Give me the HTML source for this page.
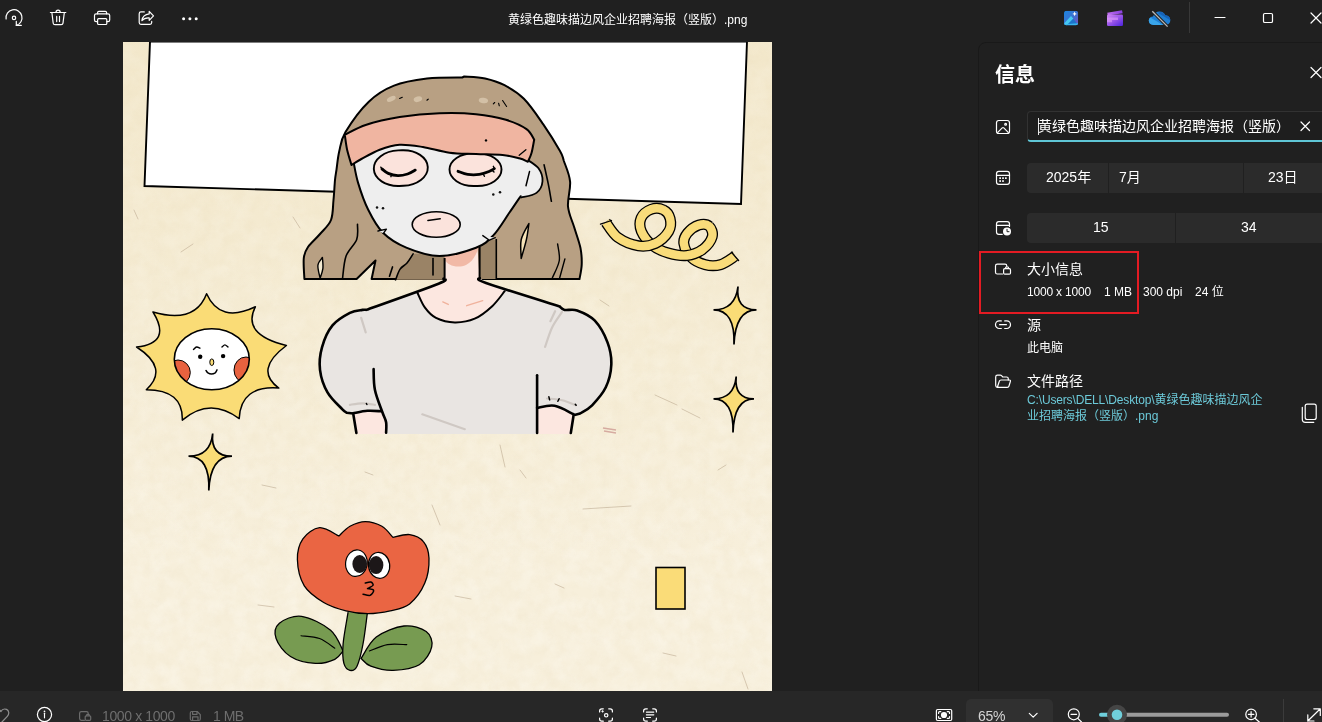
<!DOCTYPE html>
<html lang="zh-CN">
<head>
<meta charset="utf-8">
<title>照片</title>
<style>
*{box-sizing:border-box;margin:0;padding:0}
html,body{width:1322px;height:722px;overflow:hidden;background:#202020}
body{position:relative;font-family:"Liberation Sans","Noto Sans CJK SC",sans-serif;color:#fff;font-size:12px}
.abs{position:absolute}
svg{position:absolute;overflow:visible}
.ic{fill:none;stroke:#fff;stroke-width:1.2;stroke-linecap:round;stroke-linejoin:round}
.t{position:absolute;white-space:nowrap;line-height:1;will-change:transform}
#title{left:0;top:0;width:1322px;height:42px;background:#202020}
#title .name{left:508px;top:13.5px;font-size:12px;color:#fff}
#viewer{left:0;top:42px;width:979px;height:649px;background:#202020}
#art{left:123px;top:42px;width:649px;height:649px}
#panel{left:978px;top:42px;width:360px;height:660px;background:#202020;border:1px solid #191919;border-radius:8px 0 0 0}
#bottom{left:0;top:691px;width:1322px;height:31px;background:#272727}
.box{position:absolute;background:#2b2b2b;border-radius:4px}
.dim{color:#757575}
.link{color:#6cc9d8}
</style>
</head>
<body>
<!-- TITLE BAR -->
<div id="title" class="abs">
  <svg style="left:0;top:0" width="1322" height="42" viewBox="0 0 1322 42">
 <defs>
  <linearGradient id="g1" x1="0" y1="0" x2="1" y2="1"><stop offset="0" stop-color="#1a86e0"/><stop offset=".55" stop-color="#3f6fd0"/><stop offset="1" stop-color="#7a4fc0"/></linearGradient>
  <linearGradient id="g2" x1="0" y1="0" x2="1" y2="1"><stop offset="0" stop-color="#d487f5"/><stop offset=".5" stop-color="#9a55ea"/><stop offset="1" stop-color="#4a22dc"/></linearGradient>
  <linearGradient id="g3" x1="0" y1="0" x2="1" y2="0"><stop offset="0" stop-color="#c070f0"/><stop offset="1" stop-color="#8a3fe0"/></linearGradient>
  <clipPath id="c1"><rect x="1064" y="10.800" width="14.2" height="14.400" rx="2.6"/></clipPath>
 </defs>
 <!-- rotate -->
 <g class="ic" stroke-width="1.25">
  <path d="M6.100 19A8 8 0 1 1 16.300 25.400"/>
  <path d="M16.300 21.300V25.400H21.300"/>
  <circle cx="14" cy="17.900" r="1.700"/>
 </g>
 <!-- trash -->
 <g class="ic" stroke-width="1.2">
  <path d="M50.400 12.500H65.800"/>
  <path d="M56 12.300A2.100 2.100 0 0 1 60.200 12.300"/>
  <path d="M51.900 12.800L53.200 23.200Q53.400 24.700 55 24.700H61.200Q62.800 24.700 63 23.200L64.300 12.800"/>
  <path d="M56.700 16.400V21.600M59.500 16.400V21.600"/>
 </g>
 <!-- print -->
 <g class="ic" stroke-width="1.25">
  <path d="M97.600 13.800V12.600Q97.600 11.300 98.900 11.300H105.300Q106.600 11.300 106.600 12.600V13.800"/>
  <path d="M97.500 21.700H96.200Q94.500 21.700 94.500 20V15.500Q94.500 13.800 96.200 13.800H108Q109.700 13.800 109.700 15.500V20Q109.700 21.700 108 21.700H106.800"/>
  <rect x="97.600" y="18.700" width="9.200" height="5.800" rx="1"/>
 </g>
 <!-- share -->
 <g class="ic" stroke-width="1.25">
  <path d="M144.300 11.900H141Q139.200 11.900 139.200 13.700V22.600Q139.200 24.400 141 24.400H149.900Q151.700 24.400 151.700 22.600V21.400"/>
  <path d="M149.200 11.400L153.500 15.800L149.200 20.300V17.900Q144.500 17.600 141.900 20.600Q142.800 14.600 149.200 13.900Z"/>
 </g>
 <!-- more -->
 <g fill="#fff"><circle cx="183.600" cy="18.800" r="1.500"/><circle cx="189.900" cy="18.800" r="1.500"/><circle cx="196.200" cy="18.800" r="1.500"/></g>

 <!-- app icon 1 -->
 <g clip-path="url(#c1)">
  <rect x="1064" y="10.800" width="14.200" height="14.400" fill="url(#g1)"/>
  <path d="M1062 27L1071.500 16.800L1080 27Z" fill="#1d74cc"/>
  <path d="M1062 25.500L1071 16L1073.300 18.400L1066.500 25.500Z" fill="#45c8f2"/>
  <path d="M1064 25.300H1078.200V23.200Q1071 23.400 1064 24.400Z" fill="#38b4ec"/>
 </g>
 <path d="M1074.600 11.600L1075.300 13.200L1076.900 13.900L1075.300 14.600L1074.600 16.200L1073.900 14.600L1072.300 13.900L1073.900 13.200Z" fill="#fff"/>
 <!-- app icon 2 -->
 <path d="M1107.200 12.800L1122 10.200L1122.700 13.200L1107.800 15.600Z" fill="url(#g3)"/>
 <rect x="1107" y="14.600" width="16" height="11.400" rx="1.200" fill="url(#g2)"/>
 <path d="M1107 17.500H1118V20H1112V22.300H1107Z" fill="#e6a4fb" opacity=".55"/>
 <!-- onedrive -->
 <path d="M1153.500 25C1150.500 25 1148.800 23 1148.800 20.800C1148.800 18.300 1150.800 16.700 1153 16.600C1154 13.500 1156.500 11.600 1159.500 11.600C1162.500 11.600 1164.600 13.300 1165.500 15.600C1168.200 15.500 1170.300 17.600 1170.300 20.200C1170.300 23 1168.200 25 1165.500 25Z" fill="#1f7fd4"/>
 <path d="M1153.500 25C1150.500 25 1148.800 23 1148.800 20.800C1148.800 19.500 1149.400 18.300 1150.300 17.600L1163 25Z" fill="#39a5ea"/>
 <path d="M1158 13C1160.500 10.800 1164.300 12.200 1165.500 15.600C1168.200 15.500 1170.300 17.600 1170.300 20.200L1158 13Z" fill="#1763b8"/>
 <path d="M1152.300 11.200L1167.600 26.600" stroke="#202020" stroke-width="3.200"/>
 <path d="M1152.300 11.200L1167.600 26.600" stroke="#b9b9b9" stroke-width="1.300"/>
 <!-- separator -->
 <path d="M1189.500 2V33" stroke="#383838" stroke-width="1"/>
 <!-- window controls -->
 <g class="ic" stroke-width="1.050" stroke-linecap="butt">
  <path d="M1215 17.500H1225"/>
  <rect x="1263.500" y="13.500" width="9" height="9" rx="1.300"/>
  <path d="M1311 13L1321 23M1321 13L1311 23"/>
 </g>
</svg>

  <div class="t name">黄绿色趣味描边风企业招聘海报（竖版）.png</div>
</div>

<!-- VIEWER -->
<div id="viewer" class="abs"></div>
<svg id="artsvg" style="left:0;top:0" width="1322" height="722" viewBox="0 0 1322 722">
<defs>
  <clipPath id="cp"><rect x="123" y="42" width="649" height="649"/></clipPath>
  <filter id="grain" x="0" y="0" width="100%" height="100%">
    <feTurbulence type="fractalNoise" baseFrequency="0.06" numOctaves="4" seed="7" result="n"/>
    <feColorMatrix type="matrix" values="0 0 0 0 1  0 0 0 0 0.99  0 0 0 0 0.95  1.6 0 0 0 -0.55"/>
  </filter>
  <filter id="grain2" x="0" y="0" width="100%" height="100%">
    <feTurbulence type="fractalNoise" baseFrequency="0.09" numOctaves="3" seed="11" result="n"/>
    <feColorMatrix type="matrix" values="0 0 0 0 0.80  0 0 0 0 0.70  0 0 0 0 0.50  0 1.5 0 0 -0.62"/>
  </filter>
  <linearGradient id="pg" x1="0" y1="0" x2="0" y2="1"><stop offset="0" stop-color="#e6d29c" stop-opacity=".26"/><stop offset=".45" stop-color="#e6d29c" stop-opacity=".12"/><stop offset=".8" stop-color="#e6d29c" stop-opacity="0"/></linearGradient>
</defs>
<g clip-path="url(#cp)">
  <rect x="123" y="42" width="649" height="649" fill="#f7efdb"/>
  <rect x="123" y="42" width="649" height="649" filter="url(#grain)" opacity=".36"/>
  <rect x="123" y="42" width="649" height="649" filter="url(#grain2)" opacity=".22"/>
  <rect x="123" y="42" width="649" height="649" fill="url(#pg)"/>
  <g stroke="#b9a68c" stroke-width="1" fill="none" opacity=".55" stroke-linecap="round">
    <path d="M181 252l12-8M134 210l4 9M300 228l-7-11M655 395l22 10M700 418l-18-9M600 300l9 6"/>
    <path d="M262 485l14 3M432 505l8 20M500 445l5 22M583 509l48-3M455 596l16 3M258 605l16 2M564 588l-9-4M663 653l13 3M742 672l6 17M520 470l6 8M365 472l8 3M718 470l8 -5"/>
  </g>
  <path d="M603 428l13 2M604 431l12 2" stroke="#c9908a" stroke-width="1.4" opacity=".7"/>
  <!-- white sheet -->
  <path d="M150 41.5L747 41.5L741 204L144.5 186Z" fill="#fff" stroke="#000" stroke-width="1.9"/>

<g>
<path d="M709.2 226.2C707.0 224.3 702.6 223.9 698.9 225.0C695.3 226.2 689.9 230.1 687.4 233.1C684.9 236.2 683.3 239.5 683.8 243.4C684.3 247.3 686.9 253.2 690.5 256.7C694.0 260.3 699.9 263.3 705.0 264.6C710.0 265.9 715.7 266.0 720.7 264.6C725.8 263.2 732.8 257.5 735.2 256.1" fill="none" stroke="#000" stroke-width="11"/><path d="M709.2 226.2C707.0 224.3 702.6 223.9 698.9 225.0C695.3 226.2 689.9 230.1 687.4 233.1C684.9 236.2 683.3 239.5 683.8 243.4C684.3 247.3 686.9 253.2 690.5 256.7C694.0 260.3 699.9 263.3 705.0 264.6C710.0 265.9 715.7 266.0 720.7 264.6C725.8 263.2 732.8 257.5 735.2 256.1" fill="none" stroke="#f9dc7a" stroke-width="8.4"/>
<path d="M663.2 209.8C660.1 208.2 654.8 207.9 651.1 209.3C647.4 210.7 642.7 214.3 641.1 218.0C639.5 221.7 639.5 226.7 641.4 231.3C643.4 235.9 648.4 242.2 652.9 245.8C657.5 249.5 663.0 251.5 668.7 253.1C674.3 254.7 681.2 256.1 686.8 255.5C692.5 254.9 698.3 252.6 702.6 249.5C706.8 246.3 711.1 240.6 712.2 236.8C713.3 232.9 711.4 228.2 709.2 226.2" fill="none" stroke="#000" stroke-width="11"/><path d="M663.2 209.8C660.1 208.2 654.8 207.9 651.1 209.3C647.4 210.7 642.7 214.3 641.1 218.0C639.5 221.7 639.5 226.7 641.4 231.3C643.4 235.9 648.4 242.2 652.9 245.8C657.5 249.5 663.0 251.5 668.7 253.1C674.3 254.7 681.2 256.1 686.8 255.5C692.5 254.9 698.3 252.6 702.6 249.5C706.8 246.3 711.1 240.6 712.2 236.8C713.3 232.9 711.4 228.2 709.2 226.2" fill="none" stroke="#f9dc7a" stroke-width="8.4"/>
<path d="M605.7 222.2C607.8 224.8 612.4 233.4 617.8 237.4C623.3 241.3 632.2 244.8 638.4 245.8C644.7 246.8 650.3 245.8 655.4 243.4C660.4 241.0 666.2 235.4 668.7 231.3C671.1 227.2 671.0 222.2 670.1 218.6C669.2 215.0 666.4 211.3 663.2 209.8" fill="none" stroke="#000" stroke-width="11"/><path d="M605.7 222.2C607.8 224.8 612.4 233.4 617.8 237.4C623.3 241.3 632.2 244.8 638.4 245.8C644.7 246.8 650.3 245.8 655.4 243.4C660.4 241.0 666.2 235.4 668.7 231.3C671.1 227.2 671.0 222.2 670.1 218.6C669.2 215.0 666.4 211.3 663.2 209.8" fill="none" stroke="#f9dc7a" stroke-width="8.4"/>
<circle cx="663.2" cy="209.8" r="3.7" fill="#f9dc7a"/><circle cx="709.2" cy="226.2" r="3.7" fill="#f9dc7a"/>
<path d="M600.5 224.2L611.5 220.5M731.5 252.3L738.6 260.5" stroke="#000" stroke-width="1.3" fill="none" stroke-linecap="round"/>
</g>
<g fill="#fadc76" stroke="#000" stroke-width="1.7" stroke-linejoin="miter" stroke-miterlimit="10">
<path d="M738.0 286.5C736.2 302.0 742.5 309.9 756.5 309.8C742.5 309.9 734.9 321.7 734.0 344.5C734.9 321.7 727.9 309.9 713.5 309.8C727.9 309.9 736.2 302.0 738.0 286.5Z"/>
<path d="M736.2 376.5C734.7 391.4 740.8 398.9 754.0 398.8C740.8 398.9 733.7 410.4 733.0 432.5C733.7 410.4 727.0 398.9 713.5 398.8C727.0 398.9 734.7 391.4 736.2 376.5Z"/>
<path d="M212.7 433.5C211.1 448.7 217.7 456.4 232.0 456.2C217.7 456.4 209.8 468.1 208.8 490.5C209.8 468.1 202.9 456.4 188.5 456.2C202.9 456.4 211.1 448.7 212.7 433.5Z"/>
</g>
<rect x="656" y="567.5" width="29" height="41.5" fill="#fadc78" stroke="#000" stroke-width="1.6"/>
<path d="M206.6 293.7Q220.0 323.7 255.4 306.8Q241.1 334.4 286.4 345.5Q253.7 369.9 278.8 388.1Q240.7 385.1 239.2 418.6Q209.8 396.5 182.3 420.1Q183.2 389.7 146.3 389.7Q169.5 368.3 136.6 347.0Q172.2 343.2 153.0 312.0Q195.1 324.2 206.6 293.7Z" fill="#fadc76" stroke="#000" stroke-width="1.5" stroke-linejoin="round"/>
<clipPath id="sf"><ellipse cx="211.8" cy="359.2" rx="37.5" ry="30.5"/></clipPath>
<ellipse cx="211.8" cy="359.2" rx="37.5" ry="30.5" fill="#fff"/>
<g clip-path="url(#sf)"><ellipse cx="178" cy="372.500" rx="12.300" ry="12.500" fill="#e8623f" stroke="#000" stroke-width="1"/><ellipse cx="246" cy="370" rx="12" ry="13" fill="#e8623f" stroke="#000" stroke-width="1"/></g>
<ellipse cx="211.8" cy="359.2" rx="37.5" ry="30.5" fill="none" stroke="#000" stroke-width="1.6"/>
<circle cx="200.2" cy="356.8" r="2.2" fill="#000"/><circle cx="223.1" cy="356.1" r="2.2" fill="#000"/>
<ellipse cx="211.8" cy="362.2" rx="2" ry="3.3" fill="#fadc76" stroke="#000" stroke-width="1"/>
<path d="M206.0 370.5C206.3 370.9 206.9 372.3 207.9 372.9C208.8 373.5 210.3 374.1 211.5 374.1C212.7 374.1 214.2 373.6 215.2 372.9C216.1 372.2 216.7 370.4 217.0 369.9" fill="none" stroke="#000" stroke-width="1.5" stroke-linecap="round"/>
<path d="M193.5 349.4C194.0 349.0 195.5 347.2 196.6 347.0C197.6 346.8 199.4 348.0 199.9 348.2M221.9 347.0C222.4 346.7 223.9 344.9 224.9 344.9C225.9 344.9 227.4 346.7 228.0 347.0" fill="none" stroke="#000" stroke-width="1.4" stroke-linecap="round"/>
<path d="M343.1 651.0C341.0 647.5 337.6 636.0 330.6 630.2C323.7 624.4 310.1 617.5 301.6 616.3C293.0 615.2 283.6 619.6 279.4 623.3C275.1 627.0 274.2 633.0 276.1 638.5C277.9 644.0 283.9 652.4 290.5 656.5C297.0 660.7 308.0 663.0 315.4 663.4C322.8 663.9 330.2 661.4 334.8 659.3C339.4 657.2 341.7 652.4 343.1 651.0Z" fill="#779b51" stroke="#000" stroke-width="1.3"/>
<path d="M361.1 658.4C363.6 654.9 369.2 642.5 376.3 637.1C383.5 631.7 395.7 627.0 404.0 626.0C412.4 625.1 421.6 628.1 426.2 631.6C430.8 635.0 432.9 641.3 431.7 646.8C430.6 652.4 425.7 660.9 419.3 664.8C412.8 668.7 401.0 670.1 393.0 670.4C384.9 670.6 376.1 668.2 370.8 666.2C365.5 664.2 362.7 659.7 361.1 658.4Z" fill="#779b51" stroke="#000" stroke-width="1.3"/>
<path d="M301.0 635.7C304.1 636.2 313.9 636.4 319.6 638.5C325.2 640.6 332.3 646.6 334.8 648.2M369.4 651.0C372.4 649.9 381.2 645.7 387.4 644.6C393.7 643.5 403.6 644.6 406.8 644.6" fill="none" stroke="#000" stroke-width="1.1" stroke-linecap="round"/>
<path d="M348.1 612.2C347.3 617.5 343.8 635.5 343.1 644.0C342.4 652.6 342.8 659.0 343.9 663.4C345.1 667.8 347.9 669.9 350.0 670.4C352.2 670.8 354.8 670.6 357.0 666.2C359.1 661.8 361.3 653.0 363.0 644.0C364.8 635.0 366.7 617.5 367.5 612.2" fill="#779b51" stroke="#000" stroke-width="1.3"/>
<path d="M338.9 536.0C335.7 534.6 325.6 527.2 319.6 527.7C313.6 528.2 306.6 533.5 302.9 538.8C299.2 544.1 297.2 551.7 297.4 559.6C297.6 567.4 299.9 578.7 304.3 585.9C308.7 593.0 316.8 598.3 323.7 602.5C330.6 606.6 338.5 609.0 345.9 610.8C353.3 612.7 360.6 613.6 368.0 613.6C375.4 613.6 383.3 612.4 390.2 610.8C397.1 609.2 403.8 608.5 409.6 603.9C415.4 599.3 421.6 590.7 424.8 583.1C428.1 575.5 429.2 565.1 429.0 558.2C428.7 551.2 426.7 545.5 423.4 541.6C420.2 537.6 414.7 535.3 409.6 534.6C404.5 533.9 395.7 536.9 393.0 537.4C391.1 535.5 386.5 528.9 381.9 526.3C377.3 523.7 370.6 521.6 365.3 521.6C360.0 521.6 354.4 523.9 350.0 526.3C345.6 528.7 340.8 534.4 338.9 536.0Z" fill="#ea6543" stroke="#000" stroke-width="1.3" stroke-linejoin="round"/>
<ellipse cx="379.1" cy="565.4" rx="10.6" ry="13" fill="#fff" stroke="#000" stroke-width="1.2" transform="rotate(-8 379.1 565.4)"/>
<ellipse cx="356.4" cy="563.2" rx="10.8" ry="13.3" fill="#fff" stroke="#000" stroke-width="1.2" transform="rotate(8 356.4 563.2)"/>
<ellipse cx="359.7" cy="564.0" rx="7.3" ry="9" fill="#1c1718"/><ellipse cx="376.1" cy="565.1" rx="7.3" ry="9" fill="#1c1718"/>
<path d="M365.3 583.1C366.2 582.9 369.5 581.6 370.8 582.0C372.1 582.4 373.6 584.2 373.0 585.3C372.5 586.4 368.4 588.1 367.5 588.6C368.5 588.9 373.1 589.2 373.6 590.3C374.0 591.4 372.0 594.6 370.2 595.3C368.5 595.9 364.2 594.4 363.0 594.2" fill="none" stroke="#000" stroke-width="1.5" stroke-linecap="round" stroke-linejoin="round"/>
<path d="M304.4 279.0C304.3 275.5 303.2 263.3 303.8 258.0C304.4 252.7 305.3 251.0 308.0 247.0C310.7 243.0 316.2 238.5 320.0 234.0C323.8 229.5 328.8 225.7 331.0 220.0C333.2 214.3 332.8 206.7 333.5 200.0C334.2 193.3 334.5 185.1 335.0 180.0C335.5 174.9 335.8 174.4 336.5 169.6C337.2 164.8 337.8 157.4 339.3 151.1C340.8 144.9 340.6 140.4 345.5 132.1C350.4 123.9 360.7 109.4 368.8 101.7C376.9 93.9 384.3 89.4 394.0 85.6C403.7 81.8 415.6 80.0 427.0 78.6C438.3 77.3 456.4 77.6 462.2 77.5L464.2 76.5C467.7 76.8 478.4 77.0 485.1 78.4C491.9 79.9 498.1 81.8 504.5 85.2C511.0 88.6 517.4 92.3 523.9 98.8C530.4 105.3 537.3 115.7 543.3 124.4C549.3 133.1 556.6 145.1 560.0 151.1C563.4 157.2 562.2 155.7 563.8 160.8C565.5 165.8 569.4 173.9 570.1 181.6C570.8 189.2 567.3 198.9 568.0 206.5C568.7 214.1 572.1 220.3 574.2 227.3C576.3 234.2 579.2 241.8 580.5 248.1C581.7 254.3 581.9 259.5 581.7 264.7C581.5 269.8 579.9 276.6 579.5 279.0L371.6 279.0L375.5 260.5L356.6 279.0L304.4 279.0Z" fill="#b8a083" stroke="#000" stroke-width="2" stroke-linejoin="round"/>
<path d="M413.1 253.9C412.1 255.4 409.2 260.5 407.0 263.0C404.8 265.6 402.0 266.3 400.1 269.1C398.2 271.9 396.3 278.0 395.6 279.8L445.1 279.8L445.1 253.1Z" fill="#9a8366"/>
<path d="M413.1 253.9C412.1 255.4 409.2 260.5 407.0 263.0C404.8 265.6 402.0 266.3 400.1 269.1C398.2 271.9 396.3 278.0 395.6 279.8" fill="none" stroke="#000" stroke-width="1.6" stroke-linecap="round"/>
<rect x="476" y="240" width="20.3" height="39" fill="#9a8366"/><path d="M496.3 239V279" stroke="#000" stroke-width="1.6"/>
<path d="M433 258.500V275" stroke="#000" stroke-width="1.6" stroke-linecap="round"/>
<path d="M357.5 224.2C357.3 226.7 358.6 234.1 356.7 239.4C354.8 244.8 348.4 249.6 346.0 256.2C343.7 262.7 343.1 275.0 342.5 278.7" fill="none" stroke="#000" stroke-width="1.6" stroke-linecap="round"/>
<path d="M392.5 266.9L389.5 276.3" fill="none" stroke="#000" stroke-width="1.6" stroke-linecap="round"/>
<path d="M322.4 257.4C321.7 258.7 318.2 261.9 317.9 265.3C317.5 268.8 319.8 276.1 320.1 278.3C320.6 276.6 322.5 271.9 322.9 268.4C323.3 264.9 322.5 259.2 322.4 257.4Z" fill="#f3ead2" stroke="#000" stroke-width="1.4" stroke-linejoin="round"/>
<path d="M528.9 223.5C527.6 226.2 522.5 233.9 521.2 239.7C520.0 245.6 521.2 255.3 521.2 258.4C522.1 255.3 525.1 245.6 526.4 239.7C527.7 233.9 528.5 226.2 528.9 223.5Z" fill="#f6e3b8" stroke="#000" stroke-width="1.5" stroke-linejoin="round"/>
<path d="M544.1 164.9C544.8 168.1 547.0 177.6 548.2 183.6C549.5 189.7 550.8 198.4 551.4 201.3" fill="none" stroke="#000" stroke-width="1.6" stroke-linecap="round"/>
<path d="M557.6 243.9C557.9 246.7 560.1 254.9 559.3 260.5C558.4 266.2 553.5 274.9 552.4 277.8M564.9 258.9L559.7 277.8" fill="none" stroke="#000" stroke-width="1.4" stroke-linecap="round"/>
<ellipse cx="391.3" cy="98.9" rx="4.7" ry="2.3" fill="#d3c0a6" transform="rotate(-25 391.3 98.9)"/>
<ellipse cx="417.9" cy="99.2" rx="4.3" ry="2.7" fill="#d3c0a6" transform="rotate(-15 417.9 99.2)"/>
<ellipse cx="483.4" cy="100.5" rx="4.7" ry="2.7" fill="#d3c0a6" transform="rotate(10 483.4 100.5)"/>
<path d="M399.6 98.5L402.3 97.2M426.9 100.2L428.2 99.2M493.3 103.9L494.7 102.5M498.6 103.2L499.3 105.8M502.6 100.5L506.6 106.5" stroke="#000" stroke-width="1.1" stroke-linecap="round"/>
<path d="M445.1 256.2L444.3 279L440 283L417 293L455 325L506 291L486 283L479.6 279L477.6 248.1Z" fill="#fce7e0"/>
<path d="M444.6 250L444.6 259C447 266 458 268.500 466 265C472 262 476 256 478.800 247Z" fill="#f1b9a6"/>
<path d="M444.6 258V279M479.6 247V279" stroke="#000" stroke-width="2" fill="none"/>
<path d="M443.5 278.7C442.7 279.6 451.4 278.5 438.5 283.7C425.6 288.9 378.2 305.6 366.2 309.9C365.5 309.9 365.1 309.4 362.4 309.9C359.7 310.4 354.9 310.3 349.9 312.9C344.9 315.5 337.1 319.7 332.5 325.4C327.8 331.1 324.0 340.0 322.0 347.4C319.9 354.8 319.1 362.3 320.0 369.8C320.9 377.3 323.7 385.7 327.5 392.3C331.2 398.9 339.2 405.9 342.4 409.3C345.6 412.7 346.0 412.2 346.7 412.8L353.2 413.5L356.2 434L570.8 434L573.6 415.3C582.1 412.1 587.8 409.7 592.1 405.3C596.3 400.9 602.6 394.0 605.8 387.3C609.0 380.6 611.0 372.3 611.3 364.8C611.6 357.4 610.3 349.8 607.5 342.4C604.8 335.0 599.6 325.7 594.6 320.4C589.5 315.1 582.1 312.2 577.1 310.4C572.1 308.7 567.5 310.6 564.6 309.9C561.7 309.3 560.4 307.0 559.6 306.4C547.3 302.5 499.3 287.7 486.0 283.0C472.7 278.2 480.8 278.8 479.7 278.0Z" fill="#e9e5e2"/>
<path d="M417.3 292.5C418.6 294.9 421.7 303.2 424.8 307.4C427.9 311.7 431.1 315.4 436.0 317.9C441.0 320.4 448.3 322.3 454.8 322.4C461.2 322.5 468.5 321.4 474.7 318.7C481.0 316.0 487.2 310.8 492.2 306.2C497.2 301.6 502.6 293.7 504.7 291.2L486 282.500L479.6 278L444.3 278L440 283Z" fill="#fce7e0"/>
<path d="M417.3 292.5C418.6 294.9 421.7 303.2 424.8 307.4C427.9 311.7 431.1 315.4 436.0 317.9C441.0 320.4 448.3 322.3 454.8 322.4C461.2 322.5 468.5 321.4 474.7 318.7C481.0 316.0 487.2 310.8 492.2 306.2C497.2 301.6 502.6 293.7 504.7 291.2" fill="none" stroke="#000" stroke-width="2" stroke-linecap="round"/>
<path d="M442.8 301.9L448.3 304.4M466.7 305.7L482.7 300.7" stroke="#f0b29c" stroke-width="1.4" fill="none" stroke-linecap="round"/>
<path d="M353.2 413.3C355.5 412.9 362.7 411.1 367.4 410.8C372.1 410.4 378.8 411.2 381.1 411.3L386.1 419.8L386.1 434L356.2 434Z" fill="#fce7e0"/>
<path d="M537.1 407.8C540.1 407.4 548.5 404.7 554.6 405.8C560.7 406.9 570.4 412.9 573.6 414.3L570.8 434L537.1 434Z" fill="#fce7e0"/>
<g fill="none" stroke="#000" stroke-width="2.6" stroke-linecap="round" stroke-linejoin="round">
<path d="M443.5 278.7C442.7 279.6 451.4 278.5 438.5 283.7C425.6 288.9 378.2 305.6 366.2 309.9C365.5 309.9 365.1 309.4 362.4 309.9C359.7 310.4 354.9 310.3 349.9 312.9C344.9 315.5 337.1 319.7 332.5 325.4C327.8 331.1 324.0 340.0 322.0 347.4C319.9 354.8 319.1 362.3 320.0 369.8C320.9 377.3 323.7 385.7 327.5 392.3C331.2 398.9 339.2 405.9 342.4 409.3C345.6 412.7 346.0 412.2 346.7 412.8L353.2 413.5L356.4 433"/><path d="M479.7 278.0C480.8 278.8 472.7 278.2 486.0 283.0C499.3 287.7 547.3 302.5 559.6 306.4C560.4 307.0 561.7 309.3 564.6 309.9C567.5 310.6 572.1 308.7 577.1 310.4C582.1 312.2 589.5 315.1 594.6 320.4C599.6 325.7 604.8 335.0 607.5 342.4C610.3 349.8 611.6 357.4 611.3 364.8C611.0 372.3 609.0 380.6 605.8 387.3C602.6 394.0 596.3 400.9 592.1 405.3C587.8 409.7 582.1 412.1 580.1 413.5L573.6 415.3L570.8 433"/>
<path d="M353.2 413.3C355.5 412.9 362.7 411.1 367.4 410.8C372.1 410.4 378.8 411.2 381.1 411.3"/><path d="M537.1 407.8C540.1 407.4 548.5 404.7 554.6 405.8C560.7 406.9 570.4 412.9 573.6 414.3"/>
<path d="M373.6 369.1C373.8 372.5 373.4 382.6 374.9 389.8C376.3 397.0 380.5 406.9 382.4 412.3C384.2 417.7 385.5 418.8 386.1 422.3C386.7 425.7 386.1 431.0 386.1 432.7"/>
<path d="M537.1 375.3V433"/>
</g>
<g fill="none" stroke="#cfc8c3" stroke-width="2.2" stroke-linecap="round">
<path d="M361.2 317.9L365.7 332.4M562.1 311.9C560.4 314.5 555.0 321.6 552.1 327.4C549.3 333.2 546.3 343.6 545.1 346.9M555.1 311.2L550.4 321.2M422.3 414.3L464.8 429.2M349.9 404.8C352.0 404.5 358.2 403.3 362.4 403.3C366.6 403.3 372.8 404.5 374.9 404.8M547.1 398.5C549.6 398.8 557.3 399.2 562.1 400.3C566.9 401.4 573.5 404.4 575.8 405.3"/>
</g>
<path d="M366.4 403.5L366.9 404.5M548.9 396.8L549.6 399.8M559.1 398.8L557.9 401.3M575.3 404.3L576.1 405.3" stroke="#000" stroke-width="1.5" stroke-linecap="round"/>
<path d="M527.2 159.7C529.1 161.1 536.0 164.7 538.5 168.3C541.1 171.9 542.8 177.2 542.5 181.3C542.2 185.4 540.1 190.2 536.5 192.9C533.0 195.6 523.8 196.8 521.2 197.5L505.9 192.9L505.9 159.7Z" fill="#eeeeee"/>
<path d="M527.2 159.7C529.1 161.1 536.0 164.7 538.5 168.3C541.1 171.9 542.8 177.2 542.5 181.3C542.2 185.4 540.1 190.2 536.5 192.9C533.0 195.6 523.8 196.8 521.2 197.5" fill="none" stroke="#000" stroke-width="1.8" stroke-linejoin="round" stroke-linecap="round"/>
<path d="M353.1 159.7C354.0 163.5 355.6 174.6 358.1 182.9C360.6 191.2 363.9 201.2 368.1 209.5C372.2 217.8 376.7 226.4 383.0 232.8C389.4 239.1 396.9 243.8 406.3 247.7C415.7 251.6 427.9 256.0 439.5 256.0C451.1 256.0 467.1 251.1 476.0 247.7C485.0 244.3 487.8 241.2 493.3 235.4C498.9 229.6 504.7 219.4 509.3 212.8C513.8 206.3 518.7 199.0 520.6 196.2L527.9 159.7L505.9 133.1L373.1 133.1Z" fill="#eeeeee"/>
<path d="M353.1 159.7C354.0 163.5 355.6 174.6 358.1 182.9C360.6 191.2 363.9 201.2 368.1 209.5C372.2 217.8 376.7 226.4 383.0 232.8C389.4 239.1 396.9 243.8 406.3 247.7C415.7 251.6 427.9 256.0 439.5 256.0C451.1 256.0 467.1 251.1 476.0 247.7C485.0 244.3 487.8 241.2 493.3 235.4C498.9 229.6 504.7 219.4 509.3 212.8C513.8 206.3 518.7 199.0 520.6 196.2" fill="none" stroke="#000" stroke-width="2" stroke-linecap="round"/>
<path d="M529.5 171.6L526.0 185.7" stroke="#000" stroke-width="1.5" stroke-linecap="round"/>
<path d="M378.0 231.0L386.4 229.1L383.4 233.3" fill="#eeeeee" stroke="#000" stroke-width="1.4" stroke-linejoin="round" stroke-linecap="round"/>
<path d="M482.8 235.6L489.4 240.2L495.3 237.7" fill="#eeeeee" stroke="#000" stroke-width="1.4" stroke-linejoin="round" stroke-linecap="round"/>
<rect x="373.8" y="150.3" width="54" height="35.6" rx="25" ry="17.8" fill="#fbe3dc" stroke="#000" stroke-width="1.9" transform="rotate(-2 400.8 168)"/>
<rect x="449.5" y="153.200" width="52" height="32.800" rx="24" ry="16.4" fill="#fbe3dc" stroke="#000" stroke-width="1.9"/>
<path d="M382.0 169.0C383.0 169.7 385.5 172.3 388.2 173.4C390.8 174.5 394.6 175.5 397.9 175.6C401.1 175.7 404.7 174.9 407.6 174.0C410.5 173.1 414.0 170.8 415.3 170.1M458.0 171.3C459.6 171.8 464.1 173.9 467.7 174.4C471.2 174.9 475.8 174.9 479.3 174.4C482.9 173.9 486.5 172.5 489.0 171.5C491.5 170.5 493.5 169.1 494.4 168.6" fill="none" stroke="#000" stroke-width="2.8" stroke-linecap="round"/>
<path d="M382.0 169.0L380.8 167.2M391.7 174.4L390.9 176.7M483.2 174.0L484.4 176.3M491.9 170.1L494.0 172.1M494.4 168.6L493.3 166.3" stroke="#000" stroke-width="1.4" stroke-linecap="round"/>
<ellipse cx="436.2" cy="224.5" rx="24" ry="12.8" fill="#fbe3dc" stroke="#000" stroke-width="1.6"/>
<path d="M427.9 220.5L440.2 218.8" stroke="#000" stroke-width="1.5" stroke-linecap="round"/>
<circle cx="377.0" cy="207.5" r="1.25" fill="#111"/>
<circle cx="383.0" cy="208.2" r="1.25" fill="#111"/>
<circle cx="493.3" cy="194.6" r="1.25" fill="#111"/>
<circle cx="500.0" cy="192.2" r="1.25" fill="#111"/>
<path d="M344.8 134.8C348.4 133.1 357.3 127.7 366.4 124.8C375.5 121.8 387.5 119.1 399.6 117.1C411.8 115.2 426.8 113.7 439.5 113.2C452.2 112.7 465.0 113.0 476.0 114.2C487.1 115.3 497.5 117.3 505.9 119.8C514.4 122.3 521.8 125.8 526.5 129.1C531.3 132.4 532.9 138.0 534.2 139.7C533.7 141.9 532.6 149.4 531.5 153.0C530.5 156.7 528.5 160.2 527.9 161.7C526.4 161.1 523.4 159.4 519.2 158.3C515.0 157.2 509.8 155.7 502.6 155.0C495.4 154.3 484.9 154.4 476.0 154.0C467.2 153.6 458.3 153.9 449.5 152.7C440.6 151.5 431.2 148.4 422.9 147.0C414.6 145.7 406.8 144.3 399.6 144.7C392.4 145.2 386.1 147.3 379.7 149.7C373.3 152.1 366.1 156.5 361.4 159.0C356.7 161.6 353.1 164.0 351.5 165.0C350.7 162.4 348.3 154.7 347.1 149.7C346.0 144.7 345.2 137.2 344.8 134.8Z" fill="#f0b5a1" stroke="#000" stroke-width="2" stroke-linejoin="round"/>
<circle cx="486.0" cy="140.4" r="1.2" fill="#000"/>
<path d="M519.2 155.3L525.9 149.7" stroke="#000" stroke-width="1.3" stroke-linecap="round"/>
</g></svg>


<!-- INFO PANEL -->
<div id="panel" class="abs"></div>
<div class="t" style="left:995px;top:65px;font-size:20px;font-weight:bold;letter-spacing:0">信息</div>
<svg style="left:0;top:42px" width="1322" height="400" viewBox="0 42 1322 400">
 <!-- close panel -->
 <path class="ic" stroke-width="1.100" d="M1311 67.500L1321 77.500M1321 67.500L1311 77.500"/>
 <!-- image icon -->
 <g class="ic" stroke-width="1.100">
  <rect x="996.500" y="120.500" width="13" height="13" rx="2.300"/>
  <path d="M997.800 132.400L1002.200 127.900Q1003 127.200 1003.800 127.900L1008.200 132.400"/>
  <circle cx="1005.600" cy="124.300" r="0.900"/>
 </g>
 <!-- calendar icon -->
 <g class="ic" stroke-width="1.100">
  <rect x="996.500" y="171.400" width="13" height="13" rx="2.300"/>
  <path d="M996.500 175.300H1009.500"/>
 </g>
 <g fill="#fff"><rect x="999.300" y="177.300" width="1.700" height="1.700"/><rect x="1002.150" y="177.300" width="1.700" height="1.700"/><rect x="1005" y="177.300" width="1.700" height="1.700"/><rect x="999.300" y="180.200" width="1.700" height="1.700"/><rect x="1002.150" y="180.200" width="1.700" height="1.700"/></g>
 <!-- clock calendar icon -->
 <g class="ic" stroke-width="1.100">
  <path d="M1002.300 234.300H998.800Q996.500 234.300 996.500 232V224Q996.500 221.700 998.800 221.700H1007.200Q1009.500 221.700 1009.500 224V226.500"/>
  <path d="M996.500 225.400H1009.500"/>
 </g>
 <circle cx="1007" cy="231.500" r="4" fill="#fff"/>
 <path d="M1007 229.300V231.700H1009" stroke="#202020" stroke-width="1" fill="none" stroke-linecap="round" stroke-linejoin="round"/>
 <!-- size icon -->
 <g class="ic" stroke-width="1.100">
  <path d="M1002.500 274H997.300Q995.500 274 995.500 272.200V266Q995.500 264.200 997.300 264.200H1005Q1006.800 264.200 1006.800 266V266.600"/>
  <rect x="1003.600" y="268.700" width="6.900" height="5.400" rx="1.200"/>
  <path d="M1005.600 268.500V267.700Q1005.600 267 1006.300 267H1007.800Q1008.500 267 1008.500 267.700V268.500"/>
 </g>
 <!-- link icon -->
 <g class="ic" stroke-width="1.100">
  <path d="M1001.300 320.900H999.300A3.800 3.800 0 0 0 999.300 328.500H1001.300"/>
  <path d="M1004.700 320.900H1006.700A3.800 3.800 0 0 1 1006.700 328.500H1004.700"/>
  <path d="M999.600 324.700H1006.400"/>
 </g>
 <!-- folder icon -->
 <g class="ic" stroke-width="1.100">
  <path d="M998.600 387.300H997.500Q995.700 387.300 995.700 385.500V377Q995.700 375.200 997.500 375.200H1000.300Q1001 375.200 1001.500 375.700L1002.800 377H1006.500Q1008.300 377 1008.300 378.800V380"/>
  <path d="M997.300 387.300L999.300 381.300Q999.700 380 1001 380H1009.300Q1010.800 380 1010.400 381.400L1009 386Q1008.600 387.300 1007.300 387.300Z"/>
 </g>
 <!-- copy icon -->
 <g class="ic" stroke-width="1.150">
  <rect x="1305.200" y="404.200" width="11" height="15.300" rx="2"/>
  <path d="M1302.300 407.300V419.200Q1302.300 422.300 1305.400 422.300H1313.800"/>
 </g>
</svg>

<!-- name input -->
<div class="abs" style="left:1027px;top:111px;width:310px;height:31px;background:#1e1e1e;border:1px solid #323232;border-bottom:2px solid #5fc6d6;border-radius:4px"></div>
<div class="abs" style="left:1038px;top:118px;width:1px;height:17px;background:#e8e8e8"></div>
<div class="t" style="left:1038px;top:119px;font-size:14px">黄绿色趣味描边风企业招聘海报（竖版）</div>

<svg style="left:1296px;top:117px" width="18" height="18" viewBox="1296 117 18 18"><path class="ic" stroke="#d0d0d0" stroke-width="1.050" d="M1301 122L1309.500 130.500M1309.500 122L1301 130.500"/></svg>
<!-- date -->
<div class="box" style="left:1027px;top:163px;width:310px;height:30px"></div>
<div class="abs" style="left:1108px;top:163px;width:1px;height:30px;background:#202020"></div>
<div class="abs" style="left:1243px;top:163px;width:1px;height:30px;background:#202020"></div>
<div class="t" style="left:1046px;top:170px;font-size:14px">2025年</div>
<div class="t" style="left:1119px;top:170px;font-size:14px">7月</div>
<div class="t" style="left:1268px;top:170px;font-size:14px">23日</div>
<!-- time -->
<div class="box" style="left:1027px;top:213px;width:310px;height:30px"></div>
<div class="abs" style="left:1175px;top:213px;width:1px;height:30px;background:#202020"></div>
<div class="t" style="left:1093px;top:220px;font-size:14px">15</div>
<div class="t" style="left:1241px;top:220px;font-size:14px">34</div>

<!-- red highlight -->
<div class="abs" style="left:979px;top:251px;width:160px;height:63px;border:2px solid #e31b23"></div>

<div class="t" style="left:1027px;top:262px;font-size:14px">大小信息</div>
<div class="t" style="left:1027px;top:286px;font-size:12px;letter-spacing:-.2px" id="s1">1000 x 1000</div>
<div class="t" style="left:1104px;top:286px;font-size:12px" id="s2">1 MB</div>
<div class="t" style="left:1143px;top:286px;font-size:12px" id="s3">300 dpi</div>
<div class="t" style="left:1195px;top:286px;font-size:12px" id="s4">24 位</div>

<div class="t" style="left:1027px;top:318px;font-size:14px">源</div>
<div class="t" style="left:1027px;top:342px;font-size:12px">此电脑</div>

<div class="t" style="left:1027px;top:374px;font-size:14px">文件路径</div>
<div class="t link" style="left:1027px;top:394px;font-size:12px" id="p1"><span style="letter-spacing:-.15px">C:\Users\DELL\Desktop\</span>黄绿色趣味描边风企</div>
<div class="t link" style="left:1027px;top:410px;font-size:12px" id="p2">业招聘海报（竖版）.png</div>


<!-- BOTTOM BAR -->
<div id="bottom" class="abs"></div>
<div class="abs" style="left:966px;top:699px;width:87px;height:40px;background:#303030;border-radius:5px"></div>
<svg style="left:0;top:691px" width="1322" height="31" viewBox="0 691 1322 31">
 <!-- heart -->
 <path d="M1.500 722.500L7.300 716.300C9.600 713.800 9 710.500 6.500 709.400C4.300 708.500 2 709.600 0.800 711.600C-0.400 709.600 -2.700 708.500 -4.900 709.400" fill="none" stroke="#8f8f8f" stroke-width="1.200" stroke-linecap="round" stroke-linejoin="round"/>
 <!-- info -->
 <circle cx="44.500" cy="714.500" r="7.100" fill="none" stroke="#fff" stroke-width="1.200"/>
 <circle cx="44.500" cy="711.400" r="0.850" fill="#fff"/>
 <path d="M44.500 713.300V717.800" stroke="#fff" stroke-width="1.150" stroke-linecap="round"/>
 <!-- size icon (dim) -->
 <g fill="none" stroke="#6c6c6c" stroke-width="1.200" stroke-linecap="round" stroke-linejoin="round">
  <path d="M84.500 720.300H81.300Q79.600 720.300 79.600 718.600V713.300Q79.600 711.600 81.300 711.600H86.500Q88.200 711.600 88.200 713.300V713.600"/>
  <rect x="85.200" y="715.800" width="5.500" height="4.500" rx="1"/>
  <path d="M86.700 715.600V715Q86.700 714.300 87.400 714.300H88.500Q89.200 714.300 89.200 715V715.600"/>
 </g>
 <!-- save icon (dim) -->
 <g fill="none" stroke="#6c6c6c" stroke-width="1.200" stroke-linecap="round" stroke-linejoin="round">
  <path d="M191.800 711.500H197.200L200.300 714.600V719Q200.300 720.500 198.800 720.500H191.800Q190.300 720.500 190.300 719V713Q190.300 711.500 191.800 711.500Z"/>
  <path d="M192.600 711.700V714.300H197V711.700M192.600 720.300V716.800H198V720.300"/>
 </g>
 <!-- centre icon 1 -->
 <g class="ic" stroke-width="1.200">
  <path d="M599.600 712V711Q599.600 708.800 601.800 708.800H603.300M608.700 708.800H610.200Q612.400 708.800 612.400 711V712M612.400 718V719Q612.400 721.200 610.200 721.200H608.700M603.300 721.200H601.800Q599.600 721.200 599.600 719V718"/>
  <circle cx="606.200" cy="715.300" r="1.700"/>
  <path d="M602.600 710.600V712.200M601.800 711.400H603.400" stroke-width=".9"/>
 </g>
 <!-- centre icon 2 -->
 <g class="ic" stroke-width="1.200">
  <path d="M643.600 712V711Q643.600 708.800 645.800 708.800H647.300M652.700 708.800H654.200Q656.400 708.800 656.400 711V712M656.400 718V719Q656.400 721.200 654.200 721.200H652.700M647.300 721.200H645.800Q643.600 721.200 643.600 719V718"/>
  <path d="M646.400 712.100H653.800M646.400 714.800H653.800M646.400 717.500H650.500"/>
 </g>
 <!-- fit icon -->
 <g class="ic" stroke-width="1.200">
  <rect x="936.400" y="709.500" width="15.300" height="11" rx="1.200"/>
  <path d="M938.600 713.500V712.600Q938.600 711.700 939.500 711.700H940.800M947.300 711.700H948.600Q949.500 711.700 949.500 712.600V713.500M949.500 716.500V717.400Q949.500 718.300 948.600 718.300H947.300M940.800 718.300H939.500Q938.600 718.300 938.600 717.400V716.500"/>
 </g>
 <circle cx="944" cy="715" r="3.100" fill="#fff"/>
 <!-- chevron -->
 <path class="ic" stroke="#d6d6d6" stroke-width="1.100" d="M1029.300 713.400L1033.200 717.100L1037.100 713.400"/>
 <!-- zoom out -->
 <g class="ic" stroke-width="1.200">
  <circle cx="1073.800" cy="714.300" r="5.500"/>
  <path d="M1077.800 718.300L1081.500 722M1071 714.300H1076.600"/>
 </g>
 <!-- slider -->
 <path d="M1117 714.800H1227" stroke="#9b9b9b" stroke-width="4" stroke-linecap="round"/>
 <path d="M1101 714.800H1117" stroke="#6fcfdc" stroke-width="4" stroke-linecap="round"/>
 <circle cx="1117" cy="714.800" r="10" fill="#454545"/>
 <circle cx="1117" cy="714.800" r="5.300" fill="#70cfdb"/>
 <!-- zoom in -->
 <g class="ic" stroke-width="1.200">
  <circle cx="1251.100" cy="714.400" r="5.300"/>
  <path d="M1255 718.200L1259.500 722.300M1248.400 714.400H1253.800M1251.100 711.700V717.100"/>
 </g>
 <path d="M1283.500 699V722" stroke="#3b3b3b" stroke-width="1"/>
 <!-- expand -->
 <g class="ic" stroke-width="1.200">
  <path d="M1307.800 721L1320.300 708.800M1313.800 708.800H1320.300V715.500M1307.800 714.800V721H1314"/>
 </g>
</svg>
<div class="t dim" style="left:102px;top:709px;font-size:14px;letter-spacing:-.38px;color:#6e6e6e">1000 x 1000</div>
<div class="t dim" style="left:213px;top:709px;font-size:14px;letter-spacing:-.5px;color:#6e6e6e">1 MB</div>
<div class="t" style="left:978px;top:709px;font-size:14px;color:#d4d4d4;letter-spacing:-.3px">65%</div>

</body>
</html>
